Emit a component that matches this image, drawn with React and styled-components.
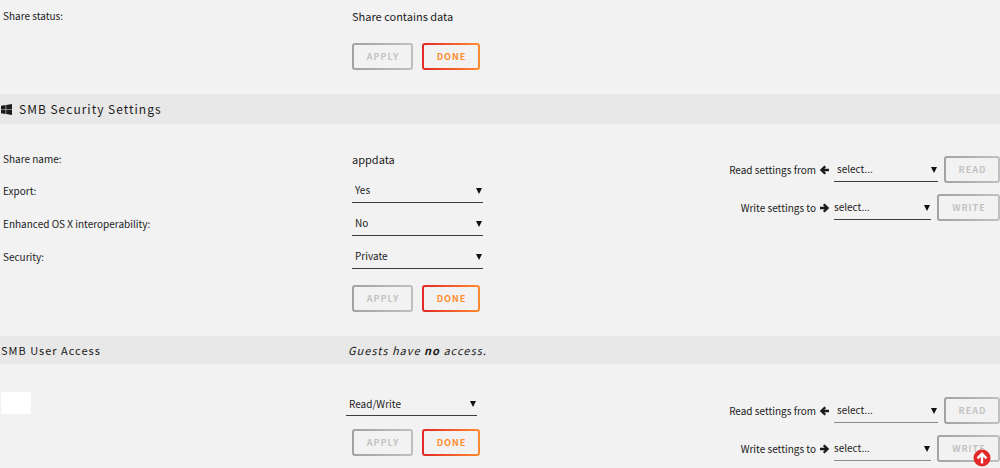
import React, { useId } from "react";
import styled, { createGlobalStyle } from "styled-components";

const GlobalStyle = createGlobalStyle`
  * { box-sizing: border-box; }
  body {
    margin: 0;
    background: #f2f2f2;
    color: #1c1b1b;
    font-family: "Noto Sans CJK SC", "Noto Sans", sans-serif;
    font-size: 10px;
    line-height: 16px;
  }
`;

const Page = styled.main`
  width: 100%;
  overflow-x: hidden;
`;

const TitleBar = styled.h2`
  display: grid;
  grid-template-columns: 348px 1fr;
  align-items: center;
  height: ${(p) => (p.$tall ? 30 : 28)}px;
  margin: 0;
  background: #e8e8e8;
  font-size: ${(p) => (p.$tall ? 12 : 11)}px;
  font-weight: 400;
  letter-spacing: 1px;
`;

const TitleText = styled.span`
  display: flex;
  align-items: center;
  gap: 7px;
  padding-left: 1px;
`;

const Section = styled.section`
  display: flex;
  justify-content: space-between;
  padding: ${(p) => p.$top || 0}px 0 24px;
`;

const Form = styled.form`
  flex: 1;
`;

const Row = styled.div`
  display: grid;
  grid-template-columns: ${(p) => (p.$user ? 346 : 349)}px 1fr;
  align-items: ${(p) => (p.$user ? "start" : "center")};
  min-height: ${(p) => (p.$plain ? 31 : 33)}px;
  padding-left: ${(p) => (p.$user ? 0 : 3)}px;
`;

const Value = styled.span`
  font-size: 11px;
`;

const Redacted = styled.span`
  width: 30px;
  height: 22px;
  margin-left: 1px;
  background: #fff;
`;

const SelectBox = styled.span`
  position: relative;
  display: flex;
  flex: ${(p) => (p.$grow ? "1" : "none")};
  width: 131px;
  &::after {
    content: "";
    position: absolute;
    right: 1px;
    top: 9px;
    border: solid transparent;
    border-width: 6px 3px 0;
    border-top-color: #111;
    pointer-events: none;
  }
`;

const SelectInput = styled.select`
  appearance: none;
  width: 100%;
  height: 24px;
  padding: 0 16px 0 ${(p) => (p.$flush ? 0 : 3)}px;
  border: 0;
  border-bottom: 1px solid ${(p) => (p.$faded ? "#8c8c8c" : "#3c3c3c")};
  border-radius: 0;
  background: transparent;
  color: inherit;
  font: inherit;
`;

const Buttons = styled.div`
  display: flex;
  gap: 9px;
  padding: ${(p) => (p.$close ? 4 : 12)}px 0 0 352px;
`;

const Button = styled.button`
  width: ${(p) => p.$width}px;
  height: 27px;
  padding: 0 0 0 1px;
  border: 2px solid transparent;
  border-radius: 3px;
  background:
    linear-gradient(#f2f2f2, #f2f2f2) padding-box,
    linear-gradient(90deg, ${(p) => (p.$active ? "#e22828, #ff8c2f" : "#a2a2a2, #c0c0c0")}) border-box;
  color: ${(p) => (p.$active ? "#ff8c2f" : "#c2c2c2")};
  font: 700 9px/12px "Noto Sans CJK SC", "Noto Sans", sans-serif;
  letter-spacing: 1px;
  text-transform: uppercase;
`;

const Aside = styled.form`
  display: flex;
  flex-direction: column;
  gap: 11px;
  padding-top: ${(p) => (p.$low ? 5 : 13)}px;
`;

const CopyRow = styled.div`
  display: flex;
  justify-content: flex-end;
  align-items: center;
  gap: 5px;
`;

const CopyLabel = styled.label`
  display: flex;
  align-items: center;
  gap: 4px;
`;

const CopyControls = styled.div`
  display: flex;
  align-items: center;
  gap: 6px;
  width: 166px;
`;

const TopLink = styled.a`
  position: fixed;
  right: 9px;
  bottom: 1px;
  display: flex;
`;

function WindowsIcon() {
  return (
    <svg width="11" height="11" viewBox="0 0 22 22" fill="#1c1b1b" aria-hidden="true">
      <path d="M0 3.4 9.3 2v8.5H0zM10.4 1.8 22 0v10.5H10.4zM0 11.6h9.3V20L0 18.6zM10.4 11.6H22V22l-11.6-1.8z" />
    </svg>
  );
}

function ArrowIcon({ right }) {
  return (
    <svg width="9" height="10" viewBox="0 0 18 20" fill="none" stroke="#1c1b1b" strokeWidth="4.6" aria-hidden="true">
      <path d={right ? "M0 10h14M7.5 2.5 15 10l-7.5 7.5" : "M18 10H4M10.5 2.5 3 10l7.5 7.5"} />
    </svg>
  );
}

function Select({ id, label, options, grow, flush, faded }) {
  return (
    <SelectBox $grow={grow}>
      <SelectInput id={id} aria-label={label} $flush={flush} $faded={faded}>
        {options.map((o) => (
          <option key={o}>{o}</option>
        ))}
      </SelectInput>
    </SelectBox>
  );
}

function Field({ label, options }) {
  const id = useId();
  return (
    <Row>
      <label htmlFor={id}>{label}</label>
      <Select id={id} options={options} />
    </Row>
  );
}

function FormButtons({ close }) {
  return (
    <Buttons $close={close}>
      <Button type="button" disabled $width={61}>Apply</Button>
      <Button type="button" $active $width={58}>Done</Button>
    </Buttons>
  );
}

function CopySettings({ low }) {
  const readId = useId();
  const writeId = useId();
  return (
    <Aside $low={low}>
      <CopyRow>
        <CopyLabel htmlFor={readId}>Read settings from <ArrowIcon /></CopyLabel>
        <CopyControls>
          <Select id={readId} options={["select..."]} grow faded={low} />
          <Button type="button" disabled $width={56}>Read</Button>
        </CopyControls>
      </CopyRow>
      <CopyRow>
        <CopyLabel htmlFor={writeId}>Write settings to <ArrowIcon right /></CopyLabel>
        <CopyControls>
          <Select id={writeId} options={["select..."]} grow flush faded={low} />
          <Button type="button" disabled $width={63}>Write</Button>
        </CopyControls>
      </CopyRow>
    </Aside>
  );
}

export default function App() {
  return (
    <Page>
      <GlobalStyle />
      <Section>
        <Form>
          <Row $plain>
            <span>Share status:</span>
            <Value>Share contains data</Value>
          </Row>
          <FormButtons />
        </Form>
      </Section>

      <TitleBar $tall>
        <TitleText><WindowsIcon />SMB Security Settings</TitleText>
      </TitleBar>
      <Section $top={19}>
        <Form>
          <Row $plain>
            <span>Share name:</span>
            <Value>appdata</Value>
          </Row>
          <Field label="Export:" options={["Yes", "No"]} />
          <Field label="Enhanced OS X interoperability:" options={["No", "Yes"]} />
          <Field label="Security:" options={["Private", "Secure", "Public"]} />
          <FormButtons />
        </Form>
        <CopySettings />
      </Section>

      <TitleBar>
        <TitleText>SMB User Access</TitleText>
        <em>Guests have <b>no</b> access.</em>
      </TitleBar>
      <Section $top={28}>
        <Form>
          <Row $user>
            <Redacted />
            <Select label="User access" options={["Read/Write", "Read-only", "No Access"]} />
          </Row>
          <FormButtons close />
        </Form>
        <CopySettings low />
      </Section>
      <TopLink href="#top" aria-label="Back to top">
        <svg width="18" height="18" viewBox="0 0 18 18" aria-hidden="true">
          <circle cx="9" cy="9" r="8.5" fill="#e22828" />
          <path d="M9 14.5V6M4.5 9.3 9 4.8l4.5 4.5" fill="none" stroke="#fff" strokeWidth="2.4" />
        </svg>
      </TopLink>
    </Page>
  );
}
